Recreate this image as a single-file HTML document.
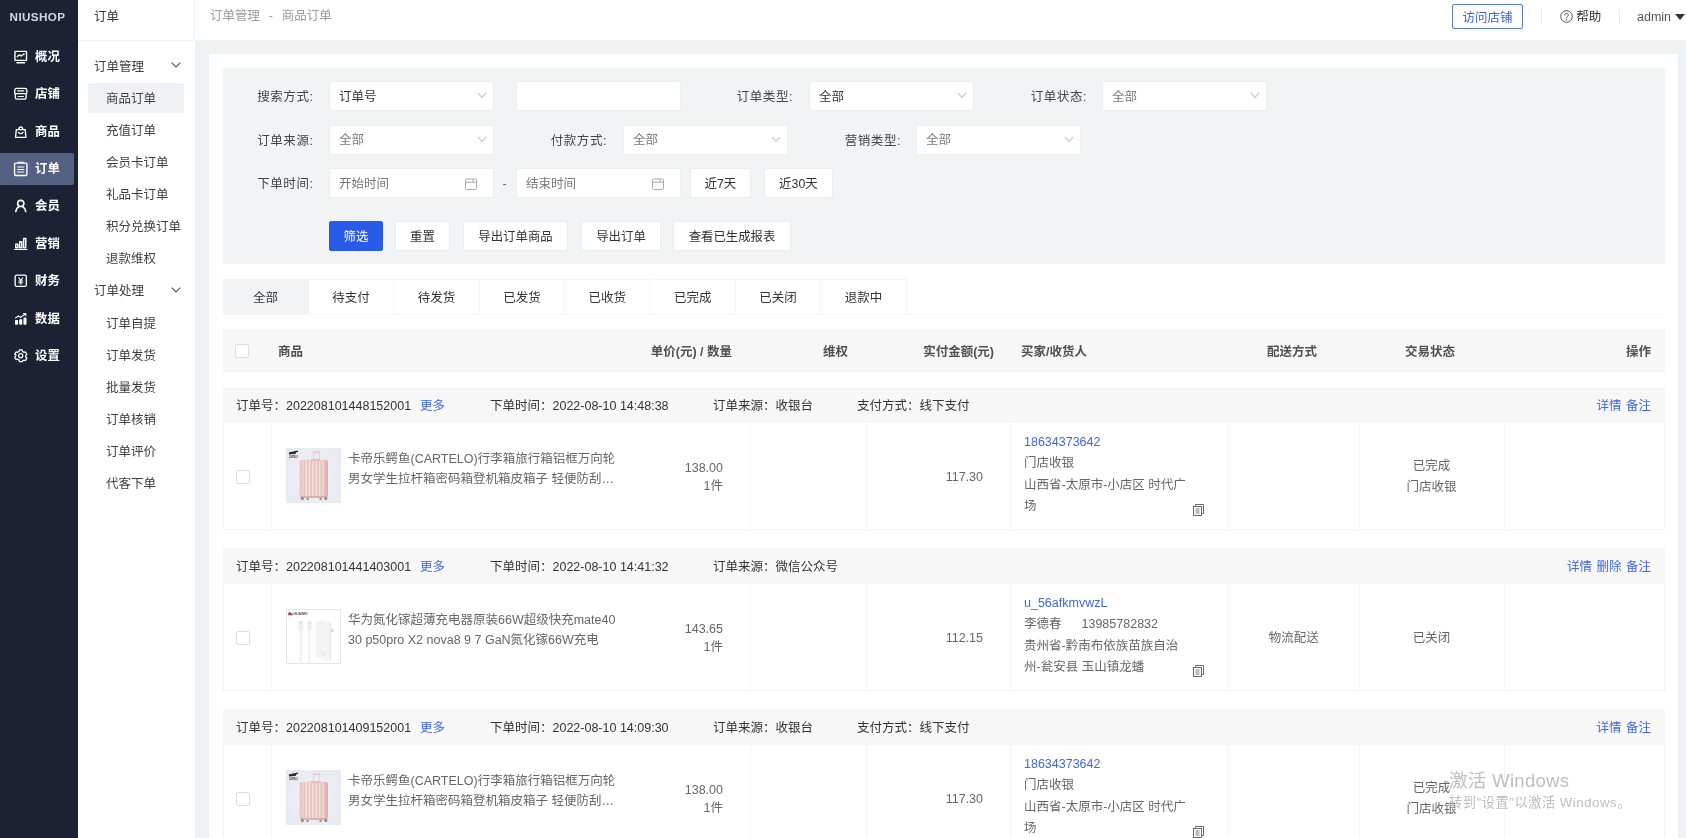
<!DOCTYPE html>
<html lang="zh-CN">
<head>
<meta charset="utf-8">
<title>商品订单</title>
<style>
*{box-sizing:border-box;margin:0;padding:0}
html,body{width:1686px;height:838px;overflow:hidden}
body{position:relative;will-change:transform;background:#f0f1f4;font-family:"Liberation Sans","Noto Sans CJK SC",sans-serif;font-size:12.5px;color:#333;line-height:1}
.abs{position:absolute}
a{color:#4066e3;text-decoration:none}
#side1{position:absolute;left:0;top:0;width:78px;height:838px;background:#1c2233}
#logo{position:absolute;left:9.6px;top:0;height:34.6px;line-height:34.6px;color:#d3d6e2;font-size:11.7px;letter-spacing:.35px;font-weight:700;white-space:nowrap}
.m1{position:absolute;left:0;width:74px;height:32px;border-radius:0 2px 2px 0;color:#fff;font-weight:700;font-size:12.4px}
.m1.on{background:#546183}
.m1 svg{position:absolute;left:14px;top:9px;width:13.5px;height:13.5px}
.m1 span{position:absolute;left:35px;top:0;line-height:32px;white-space:nowrap}
#side2{position:absolute;left:78px;top:0;width:116.6px;height:838px;background:#fff}
#side2:after{content:"";position:absolute;left:116px;top:0;width:1px;height:40px;background:#eef0f3}
#side2 .ttl{position:absolute;left:0;top:0;width:116px;height:41px;border-bottom:1px solid #eef0f3;padding-left:16px;line-height:34px;color:#333}
.g{position:absolute;left:16px;line-height:32px;color:#3d3d3d;white-space:nowrap}
.s{position:absolute;left:10.2px;width:96.3px;height:30.5px;line-height:30px;padding-left:17.8px;color:#3d3d3d;white-space:nowrap;border-radius:2px}
.s b{font-weight:400;position:relative;top:1.7px}
.s.on{background:#f0f1f4}
.chev{position:absolute;left:93px;width:10px;height:6px}
#top{position:absolute;left:195px;top:0;width:1491px;height:40px;background:#fff}
#crumb{position:absolute;left:15px;top:.4px;line-height:33px;color:#9a9a9a;white-space:nowrap;word-spacing:.9px}
#visit{position:absolute;left:1257px;top:4px;width:71px;height:25px;border:1px solid #5577e6;border-radius:2px;color:#3a62e4;text-align:center;line-height:25px;padding-top:1.2px}
.vd{position:absolute;top:9px;width:1px;height:15px;background:#e8e8e8}
#card{position:absolute;left:209px;top:54px;width:1469.4px;height:800px;background:#fff}
#filter{position:absolute;left:14px;top:14px;width:1442px;height:196px;background:#f2f3f5}
.lb{position:absolute;width:120px;text-align:right;line-height:30px;color:#444;white-space:nowrap;letter-spacing:.55px}
.sel,.inp{position:absolute;width:164.6px;height:30px;background:#fff;border:1px solid #eee;border-radius:2px;line-height:28px;padding-left:9px;padding-top:.8px;color:#333;white-space:nowrap}
.sel.ph,.inp.ph{color:#777}
.sel svg{position:absolute;right:5.4px;top:10.2px;width:10px;height:7px}
.inp svg{position:absolute;right:15.4px;top:8.6px;width:12px;height:12px}
.btn{position:absolute;height:30px;background:#fff;border:1px solid #ececec;border-radius:2px;line-height:28px;padding-top:.6px;font-size:12.4px;text-align:center;color:#333;white-space:nowrap}
.btn.pri{background:#2a5ae8;border-color:#2a5ae8;color:#fff}
#tabs{position:absolute;left:14px;top:224.75px;height:36.5px;width:1442px;border-bottom:1px solid #f6f6f6}
.tab{position:absolute;top:0;width:85.4px;height:35.5px;line-height:35.5px;padding-top:1px;text-align:center;color:#333;border:1px solid #f4f4f4;border-left:none;border-bottom:none}
.tab.on{background:#f2f3f5;border-color:#f2f3f5}
#thead{position:absolute;left:14px;top:274.75px;width:1442px;height:43.75px;background:#f7f7f7;font-weight:700;color:#505050}
#thead span{position:absolute;top:2.1px;line-height:43px;white-space:nowrap}
.cb{position:absolute;width:14px;height:14px;border:1px solid #ddd;border-radius:2px;background:#fff}
.oh{position:absolute;left:14px;width:1442px;height:36px;background:#f7f7f7;color:#333}
.oh span{position:absolute;top:1.25px;line-height:36px;white-space:nowrap}
.ob{position:absolute;left:14px;width:1442px;height:106.75px;border:1px solid #f3f3f3;border-top:none;background:#fff;color:#666}
.ob i{position:absolute;top:0;width:1px;height:105.75px;background:#f5f5f5}
.ob span{position:absolute;white-space:nowrap;line-height:21px}
.thumb{position:absolute;left:61.5px;top:25.4px;width:55px;height:55px}
.r{text-align:right}
.c{text-align:center}
#wm{position:absolute;left:1449px;top:770px;color:#bdbdbd;white-space:nowrap}
</style>
</head>
<body>
<div id="side1">
  <div id="logo">NIUSHOP</div>
  <div class="m1" style="top:41px"><svg viewBox="0 0 14 14" fill="none" stroke="#fff" stroke-width="1.4" stroke-linecap="round" stroke-linejoin="round"><rect x="1" y="1.4" width="12" height="9.4" rx=".5"/><path d="M3.4 6.8l2.2-1.8 1.8 1.2 3.2-2.2"/><path d="M3 13.2h8"/></svg><span>概况</span></div>
  <div class="m1" style="top:78px"><svg viewBox="0 0 14 14" fill="none" stroke="#fff" stroke-width="1.4" stroke-linecap="round" stroke-linejoin="round"><path d="M2.600 1.400h8.800a1.800 1.800 0 0 1 1.800 1.800v3.600h-12.400v-3.600a1.800 1.800 0 0 1 1.800-1.800z"/><path d="M1.400 6.800v4.200a1.600 1.600 0 0 0 1.600 1.600h8a1.600 1.600 0 0 0 1.600-1.600v-4.200"/><path d="M3.800 4h6.400M4.200 9.800h5.600" stroke-width="1.100"/></svg><span>店铺</span></div>
  <div class="m1" style="top:115.5px"><svg viewBox="0 0 14 14" fill="none" stroke="#fff" stroke-width="1.4" stroke-linecap="round" stroke-linejoin="round"><path d="M2.4 4.8h9.2l.8 8H1.6z"/><path d="M5 4.6c0-3.6 4-3.6 4 0"/><path d="M4.6 7.6c.8 1.8 4 1.8 4.8 0"/></svg><span>商品</span></div>
  <div class="m1 on" style="top:153px"><svg viewBox="0 0 14 14" fill="none" stroke="#fff" stroke-width="1.4" stroke-linecap="round" stroke-linejoin="round" style="overflow:visible"><rect x=".6" y="1.2" width="12.8" height="12.8" rx="1.2"/><path d="M4.6 .4h4.8"/><path d="M3.8 5.2h6.4M3.8 7.8h6.4M3.8 10.4h6.4" stroke-width="1.15"/></svg><span>订单</span></div>
  <div class="m1" style="top:190px"><svg viewBox="0 0 14 14" fill="none" stroke="#fff" stroke-width="1.7" stroke-linecap="round" stroke-linejoin="round"><circle cx="7" cy="4.6" r="3.2"/><path d="M1.8 13c.4-3.2 2.4-4.6 3.4-5.2M12.2 13c-.4-3.2-2.4-4.6-3.4-5.2"/></svg><span>会员</span></div>
  <div class="m1" style="top:227.5px"><svg viewBox="0 0 14 14" fill="none" stroke="#fff" stroke-width="1.5" stroke-linecap="round" stroke-linejoin="round"><rect x="1.8" y="7.4" width="2.2" height="3.8"/><rect x="5.9" y="4.8" width="2.2" height="6.4"/><rect x="10" y="1.6" width="2.2" height="9.6"/><path d="M.6 13.2h12.8"/></svg><span>营销</span></div>
  <div class="m1" style="top:265px"><svg viewBox="0 0 14 14" fill="none" stroke="#fff" stroke-width="1.4" stroke-linecap="round" stroke-linejoin="round"><rect x="1.2" y="1.2" width="11.6" height="11.6" rx="1.6"/><path d="M5 4l2 2.6L9 4M7 6.6v4M5 7.2h4M5 9h4" stroke-width="1.1"/></svg><span>财务</span></div>
  <div class="m1" style="top:302.5px"><svg viewBox="0 0 14 14" fill="#fff" stroke="#fff" stroke-width="1.2" stroke-linecap="round" stroke-linejoin="round"><path d="M1.6 6.2l3-2.2 2.4 1.6 4.4-3.6" fill="none"/><path d="M12.2 1.6v2.2M12.2 1.6h-2.2" fill="none"/><rect x="1.6" y="9" width="2" height="3.6" rx=".4"/><rect x="6" y="8" width="2" height="4.6" rx=".4"/><rect x="10.4" y="6.4" width="2" height="6.2" rx=".4"/></svg><span>数据</span></div>
  <div class="m1" style="top:340px"><svg viewBox="0 0 14 14" fill="none" stroke="#fff" stroke-width="1.3" stroke-linecap="round" stroke-linejoin="round"><path d="M5.6 1h2.8l.5 1.7 1.3.75 1.75-.4 1.4 2.4L12.1 6.8v1.5l1.25 1.3-1.4 2.4-1.75-.4-1.3.75L8.4 13H5.6l-.5-1.7-1.3-.75-1.75.4-1.4-2.4L1.9 7.2V5.8L.65 5.45l1.4-2.4 1.75.4 1.3-.75z"/><circle cx="7" cy="7" r="2.1"/></svg><span>设置</span></div>
</div>
<div id="side2">
  <div class="ttl">订单</div>
  <div class="g" style="top:50.8px">订单管理</div><svg class="chev" style="top:62px" viewBox="0 0 10 6" fill="none" stroke="#555" stroke-width="1.1"><path d="M.6.6L5 5l4.4-4.4"/></svg>
  <div class="s on" style="top:82.5px"><b>商品订单</b></div>
  <div class="s" style="top:114.5px"><b>充值订单</b></div>
  <div class="s" style="top:146.5px"><b>会员卡订单</b></div>
  <div class="s" style="top:178.5px"><b>礼品卡订单</b></div>
  <div class="s" style="top:210.5px"><b>积分兑换订单</b></div>
  <div class="s" style="top:242.5px"><b>退款维权</b></div>
  <div class="g" style="top:275.3px">订单处理</div><svg class="chev" style="top:286.5px" viewBox="0 0 10 6" fill="none" stroke="#555" stroke-width="1.1"><path d="M.6.6L5 5l4.4-4.4"/></svg>
  <div class="s" style="top:307.0px"><b>订单自提</b></div>
  <div class="s" style="top:339.1px"><b>订单发货</b></div>
  <div class="s" style="top:371.2px"><b>批量发货</b></div>
  <div class="s" style="top:403.3px"><b>订单核销</b></div>
  <div class="s" style="top:435.4px"><b>订单评价</b></div>
  <div class="s" style="top:467.5px"><b>代客下单</b></div>
</div>
<div id="top">
  <div id="crumb">订单管理&nbsp; - &nbsp;商品订单</div>
  <div id="visit">访问店铺</div>
  <i class="vd" style="left:1346px"></i>
  <svg class="abs" style="left:1364.5px;top:9.5px;width:13px;height:13px" viewBox="0 0 13 13" fill="none" stroke="#555" stroke-width="1"><circle cx="6.5" cy="6.5" r="5.8"/><path d="M4.7 5.1c0-2.4 3.6-2.4 3.6 0 0 1.3-1.8 1.4-1.8 2.9" stroke-linecap="round"/><circle cx="6.5" cy="9.8" r=".4" fill="#555"/></svg>
  <div class="abs" style="left:1381.3px;top:1.2px;line-height:33px;color:#333;white-space:nowrap">帮助</div>
  <i class="vd" style="left:1424px"></i>
  <div class="abs" style="left:1442px;top:.5px;line-height:32px;color:#555;white-space:nowrap">admin</div>
  <svg class="abs" style="left:1480px;top:13.8px;width:10px;height:6px" viewBox="0 0 10 6"><path d="M0 0h10L5 6z" fill="#333"/></svg>
</div>
<div id="card">
  <div id="filter">
    <div class="lb" style="left:-29.5px;top:13.8px">搜索方式:</div>
    <div class="sel" style="left:106px;top:13.0px">订单号<svg viewBox="0 0 10 7" fill="none" stroke="#cccccc" stroke-width="1.25"><path d="M.9 .9l4.1 4.6L9.1 .9"/></svg></div>
    <div class="inp ph" style="left:293px;top:13.0px"></div>
    <div class="lb" style="left:450px;top:13.8px">订单类型:</div>
    <div class="sel" style="left:586px;top:13.0px">全部<svg viewBox="0 0 10 7" fill="none" stroke="#cccccc" stroke-width="1.25"><path d="M.9 .9l4.1 4.6L9.1 .9"/></svg></div>
    <div class="lb" style="left:744px;top:13.8px">订单状态:</div>
    <div class="sel ph" style="left:879px;top:13.0px">全部<svg viewBox="0 0 10 7" fill="none" stroke="#cccccc" stroke-width="1.25"><path d="M.9 .9l4.1 4.6L9.1 .9"/></svg></div>
    <div class="lb" style="left:-29.5px;top:57.5px">订单来源:</div>
    <div class="sel ph" style="left:106px;top:56.7px">全部<svg viewBox="0 0 10 7" fill="none" stroke="#cccccc" stroke-width="1.25"><path d="M.9 .9l4.1 4.6L9.1 .9"/></svg></div>
    <div class="lb" style="left:264px;top:57.5px">付款方式:</div>
    <div class="sel ph" style="left:400px;top:56.7px">全部<svg viewBox="0 0 10 7" fill="none" stroke="#cccccc" stroke-width="1.25"><path d="M.9 .9l4.1 4.6L9.1 .9"/></svg></div>
    <div class="lb" style="left:558px;top:57.5px">营销类型:</div>
    <div class="sel ph" style="left:693px;top:56.7px">全部<svg viewBox="0 0 10 7" fill="none" stroke="#cccccc" stroke-width="1.25"><path d="M.9 .9l4.1 4.6L9.1 .9"/></svg></div>
    <div class="lb" style="left:-29.5px;top:100.8px">下单时间:</div>
    <div class="inp ph" style="left:106px;top:100.0px">开始时间<svg viewBox="0 0 12 12" fill="none" stroke="#aaa" stroke-width="1"><rect x=".5" y="1" width="11" height="10.5" rx="1"/><path d="M.5 4.2h11M8 1v3"/></svg></div>
    <div class="abs" style="left:279.5px;top:101px;line-height:30px;color:#666">-</div>
    <div class="inp ph" style="left:293px;top:100.0px">结束时间<svg viewBox="0 0 12 12" fill="none" stroke="#aaa" stroke-width="1"><rect x=".5" y="1" width="11" height="10.5" rx="1"/><path d="M.5 4.2h11M8 1v3"/></svg></div>
    <div class="btn" style="left:466.79999999999995px;top:100px;width:61.2px">近7天</div>
    <div class="btn" style="left:540.8px;top:100px;width:69.2px">近30天</div>
    <div class="btn pri" style="left:106px;top:153px;width:54px">筛选</div>
    <div class="btn" style="left:172px;top:153px;width:55px">重置</div>
    <div class="btn" style="left:240px;top:153px;width:105px">导出订单商品</div>
    <div class="btn" style="left:358px;top:153px;width:80px">导出订单</div>
    <div class="btn" style="left:450px;top:153px;width:118px">查看已生成报表</div>
  </div>
  <div id="tabs">
    <div class="tab on" style="left:0.0px;width:85.9px">全部</div>
    <div class="tab" style="left:85.9px;width:85.4px">待支付</div>
    <div class="tab" style="left:171.3px;width:85.4px">待发货</div>
    <div class="tab" style="left:256.7px;width:85.4px">已发货</div>
    <div class="tab" style="left:342.1px;width:85.4px">已收货</div>
    <div class="tab" style="left:427.5px;width:85.4px">已完成</div>
    <div class="tab" style="left:512.9px;width:85.4px">已关闭</div>
    <div class="tab" style="left:598.3px;width:85.4px">退款中</div>
  </div>
  <div id="thead">
    <div class="cb" style="left:12px;top:15.5px"></div>
    <span style="left:55px">商品</span>
    <span class="r" style="right:933px">单价(元) / 数量</span>
    <span class="r" style="right:817px">维权</span>
    <span class="r" style="right:671px">实付金额(元)</span>
    <span style="left:798px">买家/收货人</span>
    <span style="left:1044px">配送方式</span>
    <span style="left:1182px">交易状态</span>
    <span class="r" style="right:14px">操作</span>
  </div>
  <div class="oh" style="top:332.75px">
    <span style="left:13px">订单号：202208101448152001</span><span style="left:197px"><a>更多</a></span>
    <span style="left:267px">下单时间：2022-08-10 14:48:38</span>
    <span style="left:490px">订单来源：收银台</span>
    <span style="left:634px">支付方式：线下支付</span>
    <span style="right:14px;word-spacing:1px"><a>详情 备注</a></span>
  </div>
  <div class="ob" style="top:369px">
    <i style="left:47px"></i><i style="left:526px"></i><i style="left:642px"></i><i style="left:786px"></i><i style="left:1004px"></i><i style="left:1135px"></i><i style="left:1280px"></i>
    <div class="cb" style="left:12px;top:46.5px"></div>
    <svg class="thumb" viewBox="0 0 55 55"><defs><radialGradient id="tg" cx=".5" cy=".5" r=".7"><stop offset="0" stop-color="#eff2f6"/><stop offset="1" stop-color="#e6eaf0"/></radialGradient><linearGradient id="tb" x1="0" x2="1"><stop offset="0" stop-color="#e6c0bc"/><stop offset=".12" stop-color="#eed2ce"/><stop offset=".8" stop-color="#ecccc8"/><stop offset="1" stop-color="#dcaea9"/></linearGradient></defs><rect width="55" height="55" fill="url(#tg)"/><path d="M2.800 4.600l5.400-1.400 3.600-.8.300 1.300-2.200.9.200 1.100-7 .7z" fill="#2b2b2b"/><text x="3" y="10.200" font-size="3.200" font-weight="700" fill="#333" font-family="Liberation Sans,sans-serif" textLength="8.800" lengthAdjust="spacingAndGlyphs">CARTELO</text><path d="M27.600 12.400V4.400h5.800v8" fill="none" stroke="#efc8c8" stroke-width=".9"/><rect x="26.800" y="3.400" width="7.400" height="1.500" rx=".7" fill="#efc6c6"/><rect x="13.700" y="11.800" width="28.300" height="37.400" rx="2.200" fill="url(#tb)"/><g stroke="#e2bab5" stroke-width=".8"><path d="M18.400 12.800v35.600M21.800 12.800v35.600M25.200 12.800v35.600M28.600 12.800v35.600M32 12.800v35.600M35.400 12.800v35.600M38.600 12.800v35.600"/></g><g stroke="#f6e6e3" stroke-width=".9"><path d="M20.100 12.800v35.600M23.500 12.800v35.600M26.900 12.800v35.600M30.300 12.800v35.600M33.700 12.800v35.600M37 12.800v35.600"/></g><rect x="24.600" y="11.200" width="10" height="1.400" rx=".6" fill="#dcb3af"/><rect x="14.400" y="48.400" width="27" height="1.200" fill="#c79c97"/><circle cx="16.400" cy="50.600" r="1.500" fill="#93827f"/><circle cx="21.600" cy="51" r="1.300" fill="#a39491"/><circle cx="34.600" cy="51" r="1.300" fill="#a39491"/><circle cx="39.800" cy="50.600" r="1.500" fill="#93827f"/></svg>
    <span style="left:124px;top:25.6px">卡帝乐鳄鱼(CARTELO)行李箱旅行箱铝框万向轮</span>
    <span style="left:124px;top:46px">男女学生拉杆箱密码箱登机箱皮箱子 轻便防刮…</span>
    <span style="right:941px;top:34.7px">138.00</span>
    <span style="right:941px;top:52.7px">1件</span>
    <span style="right:681px;top:43.7px">117.30</span>
    <span style="left:800px;top:8.7px"><a>18634373642</a></span>
    <span style="left:800px;top:30.2px">门店收银</span>
    <span style="left:800px;top:51.8px">山西省-太原市-小店区 时代广</span>
    <span style="left:800px;top:73.3px">场</span>
    <svg class="abs" style="left:969px;top:81.25px;width:11px;height:12px" viewBox="0 0 11 12" fill="none" stroke="#6a6a6a" stroke-width="1"><path d="M2.5 2.5v-2h8v9h-2"/><rect x=".5" y="2.5" width="8" height="9"/><path d="M2.5 5h4M2.5 7h4M2.5 9h4" stroke-width=".9"/></svg>
    <span class="c" style="left:1136px;width:143px;top:32.5px">已完成</span>
    <span class="c" style="left:1136px;width:143px;top:54.2px">门店收银</span>
  </div>
  <div class="oh" style="top:493.75px">
    <span style="left:13px">订单号：202208101441403001</span><span style="left:197px"><a>更多</a></span>
    <span style="left:267px">下单时间：2022-08-10 14:41:32</span>
    <span style="left:490px">订单来源：微信公众号</span>
    <span style="right:14px;word-spacing:1px"><a>详情 删除 备注</a></span>
  </div>
  <div class="ob" style="top:530px">
    <i style="left:47px"></i><i style="left:526px"></i><i style="left:642px"></i><i style="left:786px"></i><i style="left:1004px"></i><i style="left:1135px"></i><i style="left:1280px"></i>
    <div class="cb" style="left:12px;top:46.5px"></div>
    <svg class="thumb" viewBox="0 0 55 55"><rect x=".5" y=".5" width="54" height="54" fill="#fff" stroke="#e4e4e4"/><path d="M2.2 6.3c-.2-1.8.6-3.4 1.6-3.4 1 0 1.4 1.600 1.200 3.400zM4.600 6.300c.2-1.400.8-2.400 1.500-2.200.7.300.7 1.500.3 2.200z" fill="#a8384a"/><text x="7.4" y="6.200" font-size="3.300" font-weight="700" fill="#555" font-family="Liberation Sans,sans-serif" textLength="14.2" lengthAdjust="spacingAndGlyphs">HUAWEI</text><rect x="12.4" y="11.8" width="4.800" height="10.200" rx="1.200" fill="#efefef"/><rect x="13.400" y="12.600" width="2.800" height="2.200" rx=".6" fill="#e2e2e2"/><rect x="13.700" y="21" width="2" height="34" fill="#f0f0f0"/><rect x="21" y="11.800" width="4.800" height="10.200" rx="1.200" fill="#efefef"/><rect x="22" y="12.600" width="2.800" height="2.200" rx=".6" fill="#e2e2e2"/><rect x="22.200" y="21" width="2" height="34" fill="#f0f0f0"/><path d="M29.800 12.400l6-1 9.200 2.200v36.600l-4 1.800-11.200-3z" fill="#f4f4f5"/><path d="M43.400 14.200l1.600-.6v36.600l-1.600.8z" fill="#e8e8ea"/><rect x="45" y="19.500" width="2.700" height="3.400" rx=".5" fill="#dedee0"/><path d="M34.800 41.400l4.600 1.400v4.600l-4.600-1.400z" fill="#ebebed"/></svg>
    <span style="left:124px;top:25.6px">华为氮化镓超薄充电器原装66W超级快充mate40</span>
    <span style="left:124px;top:46px">30 p50pro X2 nova8 9 7 GaN氮化镓66W充电</span>
    <span style="right:941px;top:34.7px">143.65</span>
    <span style="right:941px;top:52.7px">1件</span>
    <span style="right:681px;top:43.7px">112.15</span>
    <span style="left:800px;top:8.7px"><a>u_56afkmvwzL</a></span>
    <span style="left:800px;top:30.2px">李德春<span style="position:static;display:inline-block;width:20px"></span>13985782832</span>
    <span style="left:800px;top:51.8px">贵州省-黔南布依族苗族自治</span>
    <span style="left:800px;top:73.3px">州-瓮安县 玉山镇龙蟠</span>
    <svg class="abs" style="left:969px;top:81.25px;width:11px;height:12px" viewBox="0 0 11 12" fill="none" stroke="#6a6a6a" stroke-width="1"><path d="M2.5 2.5v-2h8v9h-2"/><rect x=".5" y="2.5" width="8" height="9"/><path d="M2.5 5h4M2.5 7h4M2.5 9h4" stroke-width=".9"/></svg>
    <span class="c" style="left:1005px;width:129.5px;top:44px">物流配送</span>
    <span class="c" style="left:1136px;width:143px;top:43.5px">已关闭</span>
  </div>
  <div class="oh" style="top:654.75px">
    <span style="left:13px">订单号：202208101409152001</span><span style="left:197px"><a>更多</a></span>
    <span style="left:267px">下单时间：2022-08-10 14:09:30</span>
    <span style="left:490px">订单来源：收银台</span>
    <span style="left:634px">支付方式：线下支付</span>
    <span style="right:14px;word-spacing:1px"><a>详情 备注</a></span>
  </div>
  <div class="ob" style="top:691px">
    <i style="left:47px"></i><i style="left:526px"></i><i style="left:642px"></i><i style="left:786px"></i><i style="left:1004px"></i><i style="left:1135px"></i><i style="left:1280px"></i>
    <div class="cb" style="left:12px;top:46.5px"></div>
    <svg class="thumb" viewBox="0 0 55 55"><defs><radialGradient id="tg" cx=".5" cy=".5" r=".7"><stop offset="0" stop-color="#eff2f6"/><stop offset="1" stop-color="#e6eaf0"/></radialGradient><linearGradient id="tb" x1="0" x2="1"><stop offset="0" stop-color="#e6c0bc"/><stop offset=".12" stop-color="#eed2ce"/><stop offset=".8" stop-color="#ecccc8"/><stop offset="1" stop-color="#dcaea9"/></linearGradient></defs><rect width="55" height="55" fill="url(#tg)"/><path d="M2.800 4.600l5.400-1.400 3.600-.8.300 1.300-2.200.9.200 1.100-7 .7z" fill="#2b2b2b"/><text x="3" y="10.200" font-size="3.200" font-weight="700" fill="#333" font-family="Liberation Sans,sans-serif" textLength="8.800" lengthAdjust="spacingAndGlyphs">CARTELO</text><path d="M27.600 12.400V4.400h5.800v8" fill="none" stroke="#efc8c8" stroke-width=".9"/><rect x="26.800" y="3.400" width="7.400" height="1.500" rx=".7" fill="#efc6c6"/><rect x="13.700" y="11.800" width="28.300" height="37.400" rx="2.200" fill="url(#tb)"/><g stroke="#e2bab5" stroke-width=".8"><path d="M18.400 12.800v35.600M21.800 12.800v35.600M25.200 12.800v35.600M28.600 12.800v35.600M32 12.800v35.600M35.400 12.800v35.600M38.600 12.800v35.600"/></g><g stroke="#f6e6e3" stroke-width=".9"><path d="M20.100 12.800v35.600M23.500 12.800v35.600M26.900 12.800v35.600M30.300 12.800v35.600M33.700 12.800v35.600M37 12.800v35.600"/></g><rect x="24.600" y="11.200" width="10" height="1.400" rx=".6" fill="#dcb3af"/><rect x="14.400" y="48.400" width="27" height="1.200" fill="#c79c97"/><circle cx="16.400" cy="50.600" r="1.500" fill="#93827f"/><circle cx="21.600" cy="51" r="1.300" fill="#a39491"/><circle cx="34.600" cy="51" r="1.300" fill="#a39491"/><circle cx="39.800" cy="50.600" r="1.500" fill="#93827f"/></svg>
    <span style="left:124px;top:25.6px">卡帝乐鳄鱼(CARTELO)行李箱旅行箱铝框万向轮</span>
    <span style="left:124px;top:46px">男女学生拉杆箱密码箱登机箱皮箱子 轻便防刮…</span>
    <span style="right:941px;top:34.7px">138.00</span>
    <span style="right:941px;top:52.7px">1件</span>
    <span style="right:681px;top:43.7px">117.30</span>
    <span style="left:800px;top:8.7px"><a>18634373642</a></span>
    <span style="left:800px;top:30.2px">门店收银</span>
    <span style="left:800px;top:51.8px">山西省-太原市-小店区 时代广</span>
    <span style="left:800px;top:73.3px">场</span>
    <svg class="abs" style="left:969px;top:81.25px;width:11px;height:12px" viewBox="0 0 11 12" fill="none" stroke="#6a6a6a" stroke-width="1"><path d="M2.5 2.5v-2h8v9h-2"/><rect x=".5" y="2.5" width="8" height="9"/><path d="M2.5 5h4M2.5 7h4M2.5 9h4" stroke-width=".9"/></svg>
    <span class="c" style="left:1136px;width:143px;top:32.5px">已完成</span>
    <span class="c" style="left:1136px;width:143px;top:54.2px">门店收银</span>
  </div>
</div>
<div id="wm"><div style="font-size:18.6px;line-height:22px;letter-spacing:.25px">激活 Windows</div><div style="font-size:13.2px;line-height:20px;letter-spacing:.55px;margin-top:.8px">转到"设置"以激活 Windows。</div></div>
</body>
</html>
